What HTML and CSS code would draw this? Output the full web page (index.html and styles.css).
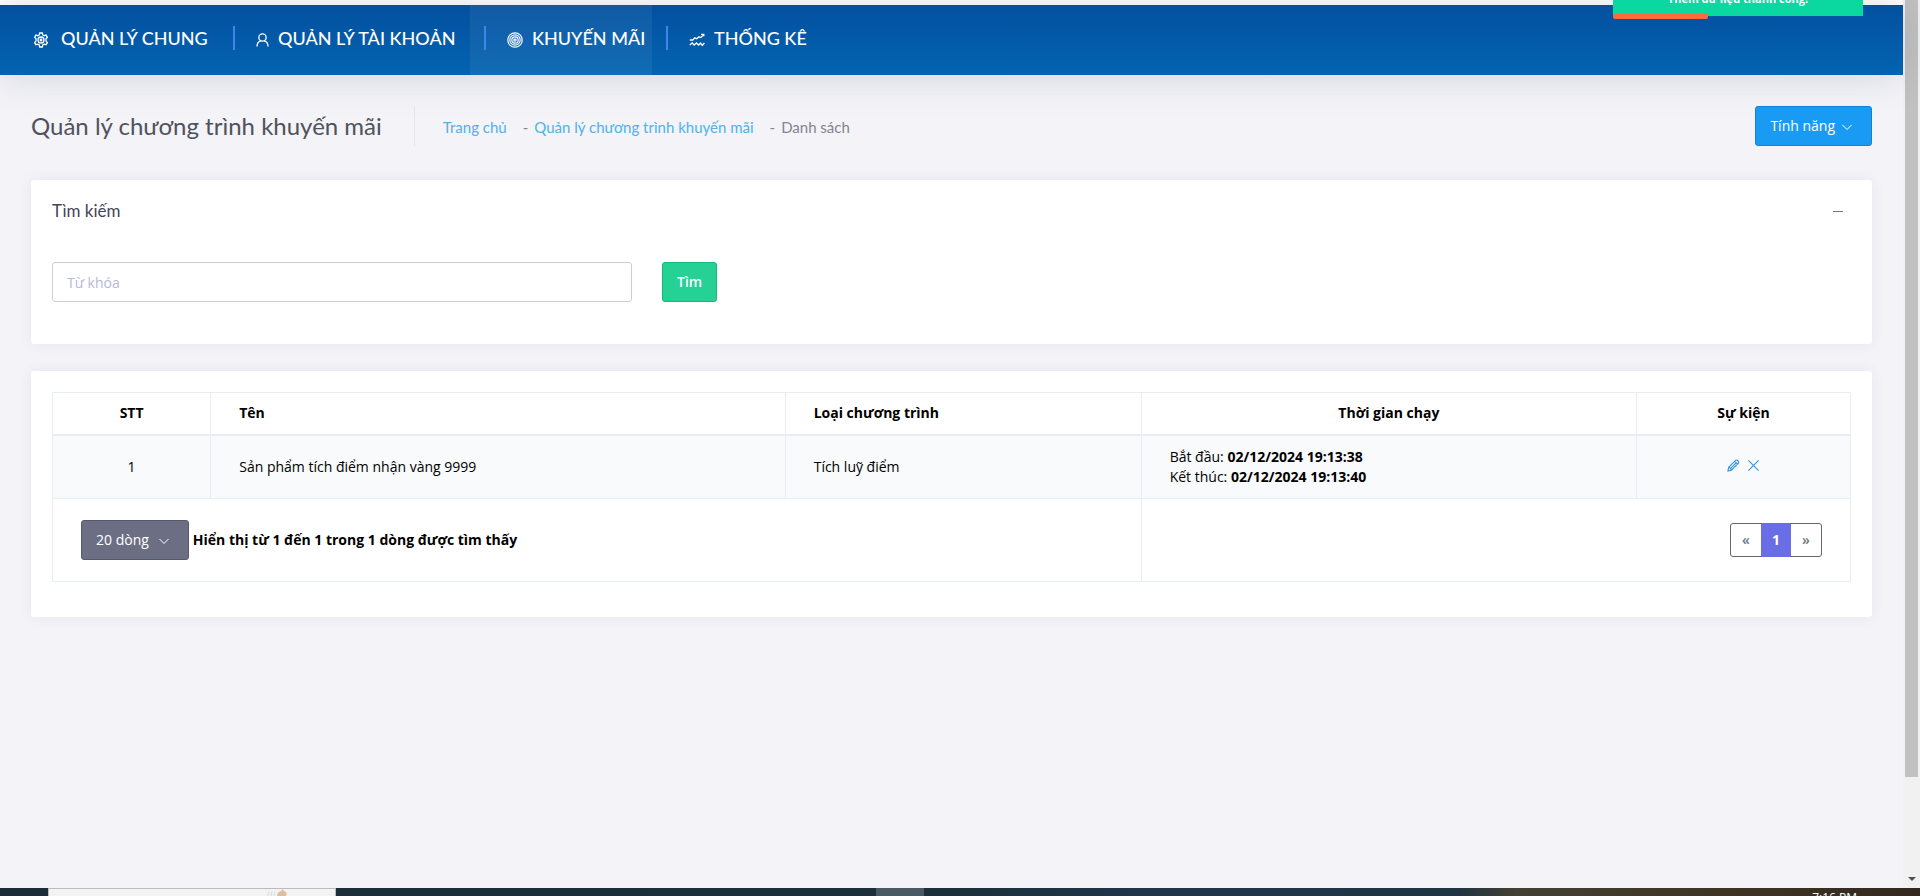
FILE: index.html
```html
<!DOCTYPE html>
<html lang="vi">
<head>
<meta charset="utf-8">
<title>Quản lý chương trình khuyến mãi</title>
<link rel="stylesheet" href="styles.css">
</head>
<body>
<div class="screen">
  <div class="viewport">
    <div class="page">
      <header class="topbar">
        <nav class="menu">
          <a class="menu-item first" href="#general">
            <svg class="icon" viewBox="0 0 16 16"><path d="M6.700 1h2.600l.4 1.800 1.500.9 1.900-.6 1.300 2.200-1.400 1.400v2.400l1.400 1.400-1.300 2.200-1.900-.6-1.500.9-.4 2H6.700l-.4-2-1.500-.9-1.900.6-1.300-2.200L3 9.100V6.700L1.600 5.300l1.300-2.200 1.900.6 1.500-.9z"/><circle cx="8" cy="8" r="3"/><circle cx="8" cy="8" r=".8"/></svg>
            <span>QUẢN LÝ CHUNG</span>
          </a>
          <a class="menu-item" href="#accounts">
            <svg class="icon person" viewBox="0 0 13 16"><circle cx="6.500" cy="5.500" r="3.700"/><path d="M1 14.500c0-3.300 2-5.300 4-5.700M12 14.500c0-3.300-2-5.300-4-5.700"/></svg>
            <span>QUẢN LÝ TÀI KHOẢN</span>
          </a>
          <a class="menu-item active" href="#promotions">
            <svg class="icon rings" viewBox="0 0 16 16"><circle cx="8" cy="8" r="7.200"/><circle cx="8" cy="8" r="5.200"/><circle cx="8" cy="8" r="3.200"/><circle cx="8" cy="8" r="1.200"/></svg>
            <span>KHUYẾN MÃI</span>
          </a>
          <a class="menu-item" href="#stats">
            <svg class="icon" viewBox="0 0 16 16"><path d="M.8 8h3l2-2.200 2 1 2-2 2 .8 3-3.200M12 2.300h2.800v2M.8 13l2.400-2 2 2 2.200-2 2.200 2 2-2 1.600 2.500 2.200-2.500"/></svg>
            <span>THỐNG KÊ</span>
          </a>
        </nav>
      </header>

      <main class="content">
        <div class="subheader">
          <h1 class="title">Quản lý chương trình khuyến mãi</h1>
          <nav class="crumbs">
            <a href="#home">Trang chủ</a>
            <span class="dash">-</span>
            <a href="#promotions">Quản lý chương trình khuyến mãi</a>
            <span class="dash">-</span>
            <span>Danh sách</span>
          </nav>
          <button class="btn btn-blue" type="button">Tính năng <svg class="chevron" viewBox="0 0 10 10"><path d="M.5 3 5 7.500 9.500 3"/></svg></button>
        </div>

        <section class="card">
          <div class="card-head">
            <h2 class="card-title">Tìm kiếm</h2>
            <button class="collapse" type="button" aria-label="Thu gọn"></button>
          </div>
          <form class="search">
            <input class="field" type="text" placeholder="Từ khóa" aria-label="Từ khóa">
            <button class="btn btn-green" type="button">Tìm</button>
          </form>
        </section>

        <section class="card card-table">
          <table class="grid">
            <colgroup><col class="c-no"><col class="c-name"><col class="c-type"><col class="c-time"><col class="c-act"></colgroup>
            <thead>
              <tr><th class="center">STT</th><th>Tên</th><th>Loại chương trình</th><th class="center">Thời gian chạy</th><th class="center">Sự kiện</th></tr>
            </thead>
            <tbody>
              <tr class="row">
                <td class="center">1</td>
                <td>Sản phẩm tích điểm nhận vàng 9999</td>
                <td>Tích luỹ điểm</td>
                <td>Bắt đầu: <b>02/12/2024 19:13:38</b><br>Kết thúc: <b>02/12/2024 19:13:40</b></td>
                <td class="center">
                  <span class="actions">
                    <a href="#edit" aria-label="Sửa"><svg class="act" viewBox="0 0 14 14"><path d="M1 13l.8-4L9.500 1.300c1-.8 3.800 1.400 3 3L4.800 12zM1.800 9c1.500.2 2.700 1.300 3 3M8.300 2.600l3 3M4.200 9.800l5.600-5.600"/></svg></a>
                    <a href="#delete" aria-label="Xóa"><svg class="act" viewBox="0 0 14 14"><path d="M1.500 1.500l11 11M12.500 1.500l-11 11"/></svg></a>
                  </span>
                </td>
              </tr>
            </tbody>
            <tfoot>
              <tr>
                <td colspan="3">
                  <div class="summary">
                    <button class="btn btn-grey" type="button">20 dòng <svg class="chevron" viewBox="0 0 10 10"><path d="M.5 3 5 7.500 9.500 3"/></svg></button>
                    <b>Hiển thị từ 1 đến 1 trong 1 dòng được tìm thấy</b>
                  </div>
                </td>
                <td colspan="2">
                  <nav class="pager"><a href="#prev">«</a><a class="current" href="#1">1</a><a href="#next">»</a></nav>
                </td>
              </tr>
            </tfoot>
          </table>
        </section>
      </main>
      <div class="toast" role="status"><span>Thêm dữ liệu thành công!</span><i class="toast-progress"></i></div>
    </div>
    <div class="scrollbar"><div class="thumb"></div><div class="arrow"></div></div>
  </div>
  <footer class="taskbar">
    <div class="task-search"><svg class="task-art" viewBox="0 0 24 7"><path class="lines" d="M2 7l1-5M5 7l1-5M8 7l1-5"/><path class="hand" d="M11 7q0-4 4-5l2-2 1 2q4 1 2 5z"/></svg></div>
    <div class="task-active"></div>
    <div class="task-clock">7:16 PM</div>
  </footer>
</div>
</body>
</html>
```
FILE: styles.css
```css
* { box-sizing: border-box; }
body {
  margin: 0;
  font: 14px/20px "Open Sans", sans-serif;
  color: #000;
  background: #f3f3f8;
}
a { color: #4fb2ea; text-decoration: none; }
svg { fill: none; stroke: currentColor; flex: none; }

.screen { display: flex; flex-direction: column; height: 100vh; overflow: hidden; }
.viewport { display: flex; flex: 1; min-height: 0; }
.page { position: relative; flex: 1; min-width: 0; padding-top: 5px; background: linear-gradient(#fff 5px, #f3f3f8 5px); }

.topbar {
  height: 70px;
  background: linear-gradient(#0350a0, #0364b0);
  box-shadow: 0 0 40px rgba(82, 83, 105, .2);
}
.menu { display: grid; grid-template-columns: 219px 251px 182px 182px; height: 100%; }
.menu-item {
  display: flex; align-items: center; gap: 9px;
  padding: 0 0 4px 14px;
  color: #fff;
  font: 500 18px/24px Lato, sans-serif;
  white-space: nowrap;
}
.menu-item::before { content: ""; width: 2px; height: 24px; margin-right: 12px; background: #3f86e8; }
.menu-item.first { padding-left: 33px; gap: 12px; }
.menu-item.first::before { display: none; }
.menu-item.active { background: rgba(255, 255, 255, .06); }
.icon { width: 16px; height: 16px; margin-top: 4px; stroke-width: 1.300; }
.icon.person { width: 13px; }
.icon.rings { stroke-width: 1.200; }

.content { padding: 0 31px; }
.subheader { display: flex; align-items: center; height: 105px; padding-bottom: 4px; }
.title {
  margin: 0; padding-right: 32px;
  border-right: 1px solid #e2e5ec;
  font: 400 24px/40px Lato, sans-serif;
  color: #4f525c;
}
.crumbs { display: flex; flex: 1; padding: 2px 0 0 28px; font: 400 15px/20px Lato, sans-serif; color: #83858f; }
.dash { padding: 0 6px 0 16px; }

.btn {
  display: inline-flex; align-items: center;
  height: 40px; padding: 0 14px;
  border: 1px solid; border-radius: 3px;
  font: 400 14px/20px "Open Sans", sans-serif;
  color: #fff;
}
.chevron { width: 10px; height: 10px; margin: 2px 0 0 7px; }
.btn-blue { padding-right: 19px; background: #1a9bf3; border-color: #1681d2; }
.btn-green { background: #25d195; border-color: #16b67c; font-weight: 600; }
.btn-grey { padding-right: 19px; background: #6c6f84; border-color: #555868; }
.btn-grey .chevron { margin-left: 10px; }

.card { padding: 0 21px; background: #fff; border-radius: 3px; box-shadow: 0 0 13px rgba(82, 63, 105, .07); }
.card-head { display: flex; align-items: center; justify-content: space-between; height: 62px; }
.card-title { margin: 0; font: 400 17px/24px Lato, sans-serif; color: #464457; }
.collapse { width: 10px; height: 20px; margin-right: 8px; padding: 0; border: 0; background: linear-gradient(#777, #777) center / 10px 1px no-repeat; }
.search { display: flex; gap: 30px; padding: 20px 0 42px; }
.field {
  width: 580px; height: 40px; padding: 0 14px;
  border: 1px solid #cdcdda; border-radius: 3px;
  font: 14px/20px "Open Sans", sans-serif; color: #333;
}
.field::placeholder { color: #b5b9d8; opacity: 1; }

.card-table { margin-top: 27px; padding: 21px 21px 35px; }
.grid { width: 100%; border-collapse: collapse; table-layout: fixed; border: 1px solid #e8ecf0; }
.c-no { width: 8.800%; }
.c-name { width: 31.950%; }
.c-type { width: 19.800%; }
.c-time { width: 27.550%; }
.grid th, .grid td { padding: 0 28px; border: 1px solid #e8ecf3; text-align: left; }
.grid th { height: 42px; border-bottom-width: 2px; font-weight: 700; }
.grid .center { text-align: center; }
.row { height: 64px; background: #f9fafb; }
tfoot tr { height: 83px; }
.actions { display: flex; justify-content: center; gap: 7px; padding-bottom: 2px; }
.act { display: block; width: 13px; height: 13px; stroke-width: 1.200; }
.actions a { color: #3295de; }
.summary { display: flex; align-items: center; gap: 4px; }

.pager { display: flex; width: 92px; height: 34px; margin-left: auto; border: 1px solid #686868; border-radius: 3px; }
.pager a { flex: 1; line-height: 32px; text-align: center; font-weight: 600; color: #6c6f84; }
.pager .current { margin: -1px 0; line-height: 34px; font-weight: 700; color: #fff; background: #696ee6; }

.toast {
  position: absolute; top: 0; right: 40px;
  width: 250px; height: 16px;
  background: #0ad8a0; color: #fff;
  font: 700 11px/16px "Open Sans", sans-serif; text-align: center;
}
.toast span { display: block; margin-top: -9px; }
.toast-progress { position: absolute; left: 0; bottom: -3px; width: 95px; height: 5px; border-radius: 2px; background: #ff6a3c; }

.scrollbar { display: flex; flex-direction: column; justify-content: space-between; align-items: center; width: 17px; background: #f1f1f1; }
.thumb { width: 13px; height: 87.500%; background: #c1c1c1; }
.arrow { margin-bottom: 7px; border: 4px solid transparent; border-top-color: #505050; border-bottom: 0; }

.taskbar {
  display: grid; grid-template-columns: 48px 288px 540px 48px 1fr auto;
  height: 8px; padding-right: 63px; overflow: hidden;
  background: linear-gradient(90deg, #1c2d37, #1d303a 50%, #20354a 60%, #203441 76%, #434033 79%, #3d3426 90%, #33281f);
}
.task-search { grid-column: 2; border: 1px solid #bbb; border-bottom: 0; background: #f3f3f3; }
.task-art { display: block; width: 24px; height: 7px; margin-left: 217px; }
.lines { stroke: #ddd; }
.hand { fill: #dcbfa2; stroke: none; }
.task-active { grid-column: 4; background: #4a5962; }
.task-clock { grid-column: 6; padding-top: 2px; font: 12px/16px "Open Sans", sans-serif; color: #fff; }
```
